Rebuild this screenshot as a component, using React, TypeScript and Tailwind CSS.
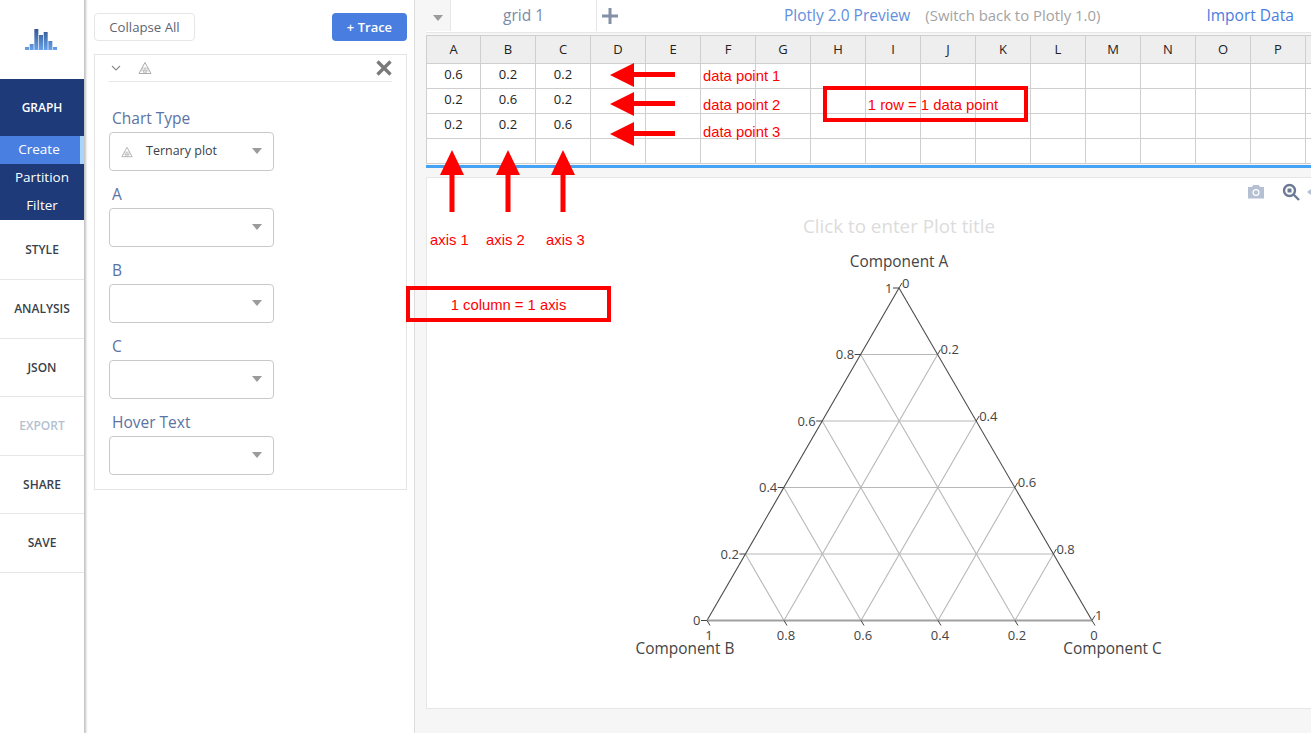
import React from "react";

const OS = "font-['Open_Sans',sans-serif]";
const AR = "font-['Liberation_Sans',Arial,sans-serif]";

function Logo() {
  const bars = [3, 6, 21, 15, 18, 9, 3];
  return (
    <svg width="44" height="24" viewBox="0 0 44 24">
      <defs>
        <linearGradient id="lg" x1="0" y1="0" x2="0" y2="24" gradientUnits="userSpaceOnUse">
          <stop offset="0" stopColor="#2f4f86" />
          <stop offset="1" stopColor="#6aa6ee" />
        </linearGradient>
      </defs>
      {bars.map((h, i) => (
        <rect key={i} x={5 + i * 4.67} y={23 - h} width="4" height={h} fill="url(#lg)" />
      ))}
    </svg>
  );
}

function Tri({ size = 14 }: { size?: number }) {
  return (
    <svg width={size} height={size} viewBox="0 0 14 14" fill="none" stroke="#a3a3a3" strokeWidth="0.9">
      <path d="M7 1.5 L13 12.5 H1 Z" />
      <path d="M4 7 H10 M2.5 9.8 H11.5 M7 7 L5 12.5 M7 7 L9 12.5 M4 7 L7 12.5 L10 7" strokeWidth="0.5" />
    </svg>
  );
}

function Caret() {
  return (
    <svg width="10" height="6" viewBox="0 0 10 6">
      <path d="M0 0 H10 L5 6 Z" fill="#9b9b9b" />
    </svg>
  );
}

function NavItem({ label, muted, h }: { label: string; muted?: boolean; h: string }) {
  return (
    <div className={`${h} flex items-center justify-center border-b border-[#e6e6e6] text-[12px] font-semibold ${muted ? "text-[#b4bfd0]" : "text-[#3a3f4a]"}`}>
      {label}
    </div>
  );
}

function Dropdown({ label, children, top }: { label: string; children?: React.ReactNode; top: string }) {
  return (
    <div className={top}>
      <div className="ml-[3px] text-[15.5px] leading-[20px] text-[#5b73a3]">{label}</div>
      <div className="mt-[4px] flex h-[39px] w-[165px] items-center justify-between rounded-[4px] border border-[#c9c9c9] bg-white pl-[11px] pr-[11px]">
        <div className="flex items-center gap-[13px] text-[12.5px] text-[#3a3f4a]">{children}</div>
        <div className="-mt-[2px]"><Caret /></div>
      </div>
    </div>
  );
}

const cols = "ABCDEFGHIJKLMNOP".split("");
const rows = [
  ["0.6", "0.2", "0.2"],
  ["0.2", "0.6", "0.2"],
  ["0.2", "0.2", "0.6"],
  ["", "", ""],
];

function Sheet() {
  return (
    <div className="flex h-[129px] shrink-0 flex-col overflow-hidden border-t border-[#cfcfcf] bg-white">
      <div className="flex h-[28px] shrink-0 border-b border-[#cfcfcf] bg-[#eeeeee]">
        {cols.map((c, j) => (
          <div key={c} className={`flex shrink-0 items-center justify-center border-l border-[#cfcfcf] text-[13px] text-[#222] ${j === 0 ? "w-[54px]" : "w-[55px]"}`}>
            {c}
          </div>
        ))}
        <div className="w-[6px] shrink-0 border-l border-[#cfcfcf]" />
      </div>
      {rows.map((r, i) => (
        <div key={i} className="flex h-[25px] shrink-0 border-b border-[#cfcfcf]">
          {cols.map((c, j) => (
            <div key={c} className={`flex shrink-0 items-center justify-center border-l border-[#cfcfcf] pb-[2px] text-[13px] text-[#222] ${j === 0 ? "w-[54px]" : "w-[55px]"}`}>
              {r[j] ?? ""}
            </div>
          ))}
          <div className="w-[6px] shrink-0 border-l border-[#cfcfcf]" />
        </div>
      ))}
    </div>
  );
}

function Ternary() {
  const A = [899, 288];
  const B = [707, 620.5];
  const C = [1092, 620.5];
  const lerp = (p: number[], q: number[], t: number) => [p[0] + (q[0] - p[0]) * t, p[1] + (q[1] - p[1]) * t];
  const ts = [0.2, 0.4, 0.6, 0.8];
  const grid: number[][][] = [];
  ts.forEach((t) => {
    grid.push([lerp(A, B, t), lerp(A, C, t)]);
    grid.push([lerp(B, A, t), lerp(B, C, t)]);
    grid.push([lerp(C, A, t), lerp(C, B, t)]);
  });
  const tick = "#444";
  const left: [string, number][] = [["1", 0], ["0.8", 0.2], ["0.6", 0.4], ["0.4", 0.6], ["0.2", 0.8], ["0", 1]];
  const right: [string, number][] = [["0", 0], ["0.2", 0.2], ["0.4", 0.4], ["0.6", 0.6], ["0.8", 0.8], ["1", 1]];
  const bottom: [string, number][] = [["1", 0], ["0.8", 0.2], ["0.6", 0.4], ["0.4", 0.6], ["0.2", 0.8], ["0", 1]];
  return (
    <svg className="absolute left-0 top-0" width="1311" height="733" viewBox="0 0 1311 733" fontFamily="'Open Sans',sans-serif">
      {grid.map((g, i) => (
        <line key={i} x1={g[0][0]} y1={g[0][1]} x2={g[1][0]} y2={g[1][1]} stroke="#b8b8b8" strokeWidth="1.1" />
      ))}
      <line x1={A[0]} y1={A[1]} x2={B[0]} y2={B[1]} stroke="#4a4a4a" strokeWidth="1.1" />
      <line x1={A[0]} y1={A[1]} x2={C[0]} y2={C[1]} stroke="#4a4a4a" strokeWidth="1.1" />
      <line x1={B[0]} y1={B[1]} x2={C[0]} y2={C[1]} stroke="#a0a0a0" strokeWidth="2" />
      {left.map(([l, t]) => {
        const p = lerp(A, B, t);
        return (
          <g key={l}>
            <line x1={p[0] - 6} y1={p[1]} x2={p[0]} y2={p[1]} stroke={tick} />
            <text x={p[0] - 6.5} y={p[1] + 4.5} textAnchor="end" fontSize="13" fill="#444">{l}</text>
          </g>
        );
      })}
      {right.map(([l, t]) => {
        const p = lerp(A, C, t);
        return (
          <g key={l}>
            <line x1={p[0]} y1={p[1]} x2={p[0] + 3} y2={p[1] - 5} stroke={tick} />
            <text x={p[0] + 3} y={p[1] - 0.5} fontSize="13" fill="#444">{l}</text>
          </g>
        );
      })}
      {bottom.map(([l, t]) => {
        const p = lerp(B, C, t);
        return (
          <g key={l}>
            <line x1={p[0]} y1={p[1]} x2={p[0] + 3} y2={p[1] + 5} stroke={tick} />
            <text x={p[0] + 2} y={p[1] + 19} textAnchor="middle" fontSize="13" fill="#444">{l}</text>
          </g>
        );
      })}
      <text x="899" y="267" textAnchor="middle" fontSize="15.4" fill="#444">Component A</text>
      <text x="685" y="654" textAnchor="middle" fontSize="15.4" fill="#444">Component B</text>
      <text x="1112.5" y="654" textAnchor="middle" fontSize="15.4" fill="#444">Component C</text>
      <text x="899" y="233" textAnchor="middle" fontSize="18.8" fill="#dcdcdc">Click to enter Plot title</text>
    </svg>
  );
}

function Annotations() {
  const lefts = [75, 104, 134];
  const ups = [452, 508, 563];
  return (
    <>
      <svg className="absolute left-0 top-0" width="1311" height="733" viewBox="0 0 1311 733">
        {lefts.map((y) => (
          <path key={y} d={`M610 ${y} L634 ${y - 12} V${y - 3} H675 V${y + 2} H634 V${y + 12} Z`} fill="#ff0000" />
        ))}
        {ups.map((x) => (
          <path key={x} d={`M${x} 150 L${x + 12} 175 H${x + 2.5} V212 H${x - 2.5} V175 H${x - 12} Z`} fill="#ff0000" />
        ))}
      </svg>
      {[
        ["data point 1", "left-[703px] top-[68px]"],
        ["data point 2", "left-[703px] top-[97px]"],
        ["data point 3", "left-[703px] top-[124px]"],
        ["axis 1", "left-[430px] top-[232px]"],
        ["axis 2", "left-[486px] top-[232px]"],
        ["axis 3", "left-[546px] top-[232px]"],
      ].map(([t, c]) => (
        <div key={t} className={`absolute ${c} ${AR} text-[14.8px] leading-[16px] text-[#ff0000]`}>{t}</div>
      ))}
      <div className={`absolute left-[823px] top-[86px] flex h-[36px] w-[205px] items-center justify-center border-[4px] border-[#ff0000] pl-[15px] pt-[2px] ${AR} text-[14.8px] text-[#ff0000]`}>
        1 row = 1 data point
      </div>
      <div className={`absolute left-[406px] top-[286px] flex h-[36px] w-[205px] items-center justify-center border-[4px] border-[#ff0000] pt-[2px] ${AR} text-[14.8px] text-[#ff0000]`}>
        1 column = 1 axis
      </div>
    </>
  );
}

export default function App() {
  return (
    <div className={`relative flex h-[733px] w-[1311px] overflow-hidden bg-white ${OS}`}>
      {/* nav */}
      <div className="z-10 flex w-[84px] shrink-0 flex-col bg-white shadow-[1px_0_2px_1px_#c4c4c4]">
        <div className="flex h-[79px] items-center justify-center"><div className="-mt-[1px]"><Logo /></div></div>
        <div className="bg-[#1e3a78]">
          <div className="flex h-[57px] items-center justify-center text-[12px] font-semibold text-white">GRAPH</div>
          <div className="flex h-[28px] items-center justify-center border-r-[4px] border-[#a9d4fb] bg-[#4a7fe2] pb-[1px] pr-[2px] text-[13.5px] text-white">Create</div>
          <div className="flex h-[28px] items-center justify-center pb-[1px] text-[13.5px] text-white">Partition</div>
          <div className="flex h-[28px] items-center justify-center pb-[1px] text-[13.5px] text-white">Filter</div>
        </div>
        <NavItem label="STYLE" h="h-[60px]" />
        <NavItem label="ANALYSIS" h="h-[59px]" />
        <NavItem label="JSON" h="h-[58px]" />
        <NavItem label="EXPORT" h="h-[59px]" muted />
        <NavItem label="SHARE" h="h-[58px]" />
        <NavItem label="SAVE" h="h-[59px]" />
      </div>

      {/* panel */}
      <div className="w-[330px] shrink-0 pl-[10px] pr-[7px] pt-[13px]">
        <div className="flex items-center justify-between">
          <div className="flex h-[28px] w-[101px] items-center justify-center rounded-[4px] border border-[#e6e6e6] pt-[1px] text-[13.2px] text-[#5f6672]">Collapse All</div>
          <div className="flex h-[28px] w-[75px] items-center justify-center rounded-[4px] bg-[#4a7de0] pt-[1px] text-[13px] font-semibold text-white">+ Trace</div>
        </div>
        <div className="mt-[13px] h-[436px] w-[313px] border border-[#e4e4e4] px-[14px]">
          <div className="flex h-[27px] items-center justify-between border-b border-[#e6e6e6]">
            <div className="ml-[1px] flex items-center gap-[16px]">
              <svg width="12" height="8" viewBox="0 0 12 8" fill="none" stroke="#8a8a8a" strokeWidth="1.1"><path d="M2 2 L6 6 L10 2" /></svg>
              <Tri />
            </div>
            <svg width="16" height="16" viewBox="0 0 16 16" stroke="#7a7a7a" strokeWidth="3.3"><path d="M1.5 1.5 L14.5 14.5 M14.5 1.5 L1.5 14.5" /></svg>
          </div>
          <div className="pt-[26px]">
            <Dropdown label="Chart Type" top="">
              <Tri size={12} />
              <span>Ternary plot</span>
            </Dropdown>
            <Dropdown label="A" top="mt-[13px]" />
            <Dropdown label="B" top="mt-[13px]" />
            <Dropdown label="C" top="mt-[13px]" />
            <Dropdown label="Hover Text" top="mt-[13px]" />
          </div>
        </div>
      </div>

      {/* right */}
      <div className="flex min-w-0 flex-1 flex-col border-l border-[#dcdcdc] bg-[#f6f6f6] pl-[11px]">
        <div className="flex h-[33px] shrink-0 items-stretch border-b border-[#e6e6e6] bg-white pb-[1px]">
          <div className="flex w-[24px] items-center justify-center bg-[#f6f6f6] pt-[4px]"><Caret /></div>
          <div className="flex w-[147px] items-center justify-center border-x border-[#e6e6e6] bg-white text-[15.5px] text-[#7a8aa8]">grid 1</div>
          <div className="flex w-[26px] items-center justify-center">
            <svg width="16" height="16" viewBox="0 0 16 16" stroke="#8490a8" strokeWidth="3"><path d="M8 0 V16 M0 8 H16" /></svg>
          </div>
          <div className="ml-[161px] flex items-center text-[15.5px] text-[#5f8fdd]">Plotly 2.0 Preview</div>
          <div className="ml-[15px] flex items-center text-[14.9px] text-[#a3a3a3]">(Switch back to Plotly 1.0)</div>
          <div className="ml-[106px] flex items-center text-[15.5px] text-[#4a7de0]">Import Data</div>
        </div>
        <div className="h-[2px] shrink-0" />
        <Sheet />
        <div className="h-[1px] shrink-0" />
        <div className="h-[3px] shrink-0 bg-[#45a3f5]" />
        <div className="h-[9px] shrink-0" />
        <div className="relative h-[532px] shrink-0 border-y border-l border-[#e6e6e6] bg-white">
          <div className="absolute right-[-2px] top-[5px] flex items-center">
            <svg width="18" height="16" viewBox="0 0 18 16" fill="#b5c0d3"><path d="M1 3 H5 L6 1 H12 L13 3 H17 V14.5 H1 Z" /><circle cx="9" cy="8.5" r="3.5" fill="#fff" /><circle cx="9" cy="8.5" r="2.2" /></svg>
            <svg className="ml-[17px]" width="18" height="18" viewBox="0 0 18 18" fill="none" stroke="#6b7a94" strokeWidth="2.4"><circle cx="7.5" cy="7.5" r="5.5" /><rect x="5.5" y="5.5" width="4" height="4" fill="#6b7a94" stroke="none" /><path d="M11.5 11.5 L17 17" /></svg>
            <svg className="ml-[7px]" width="6" height="12" viewBox="0 0 6 12"><path d="M0 6 L6 1.5 V10.5 Z" fill="#b5c0d3" /></svg>
          </div>
        </div>
      </div>

      <Ternary />
      <Annotations />
    </div>
  );
}
